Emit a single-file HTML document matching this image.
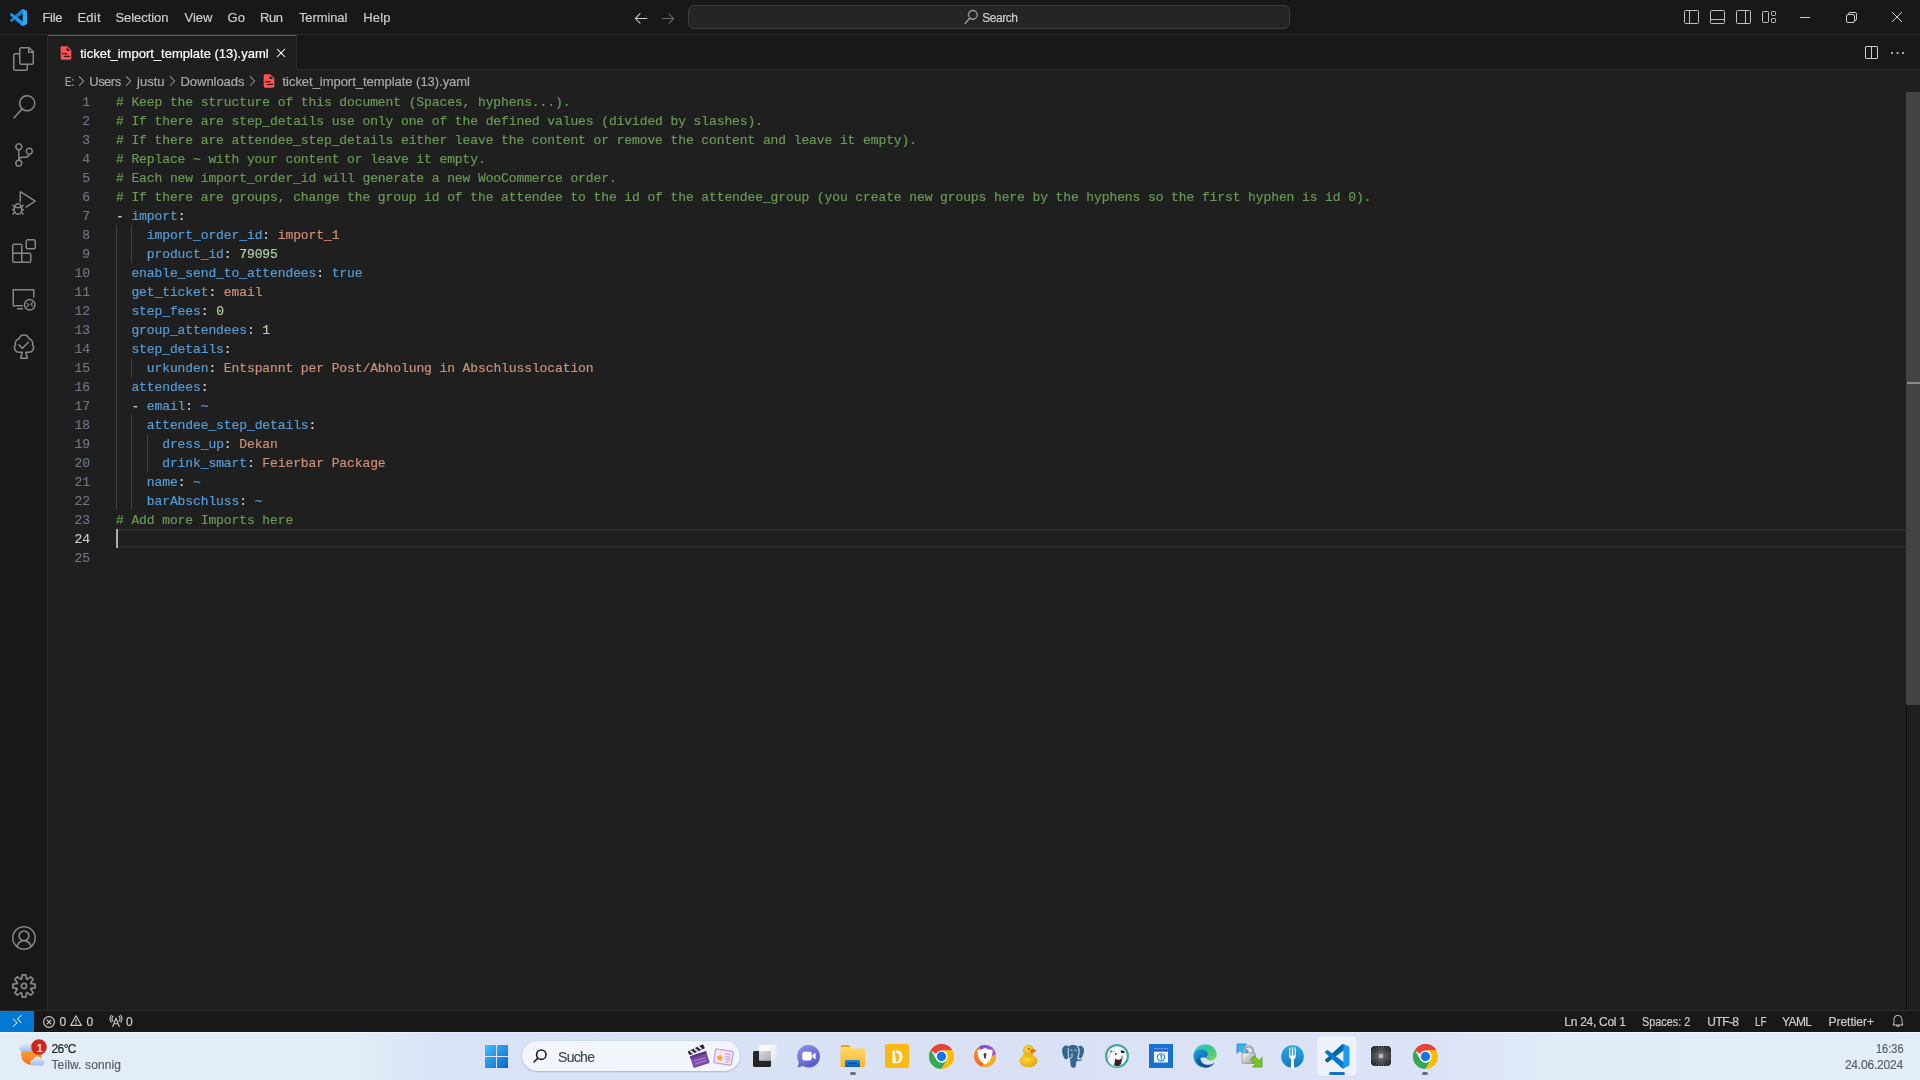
<!DOCTYPE html>
<html lang="en">
<head>
<meta charset="utf-8">
<title>ticket_import_template (13).yaml - Visual Studio Code</title>
<style>

*{box-sizing:border-box;margin:0;padding:0}
html,body{width:1920px;height:1080px;overflow:hidden;background:#1f1f1f}
body{position:relative;font-family:"Liberation Sans",sans-serif;-webkit-font-smoothing:antialiased}
#root{position:absolute;left:0;top:0;width:1920px;height:1080px;will-change:transform}
.t{position:absolute;white-space:pre;line-height:0;height:0;-webkit-text-stroke:0.2px}
svg{position:absolute;overflow:visible}
#titlebar{position:absolute;left:0;top:0;width:1920px;height:35px;background:#181818;border-bottom:1px solid #2b2b2b}
#cmd{position:absolute;left:688px;top:5px;width:602px;height:24px;border:1px solid #3c3c3c;border-radius:6px;background:#252525}
#activity{position:absolute;left:0;top:35px;width:48px;height:975px;background:#181818;border-right:1px solid #2b2b2b}
#tabs{position:absolute;left:48px;top:35px;width:1872px;height:35px;background:#181818;border-bottom:1px solid #2b2b2b}
#tab{position:absolute;left:0;top:0;width:249px;height:35px;background:#1f1f1f;border-top:1px solid #0078d4;border-right:1px solid #2b2b2b}
#crumbs{position:absolute;left:48px;top:70px;width:1872px;height:22px;background:#1f1f1f}
#editor{position:absolute;left:48px;top:92px;width:1872px;height:918px;background:#1f1f1f}
.ln{position:absolute;left:0;width:42px;text-align:right;height:19px;line-height:19px;font-family:"Liberation Mono",monospace;font-size:13px;letter-spacing:-0.1px;color:#6e7681;white-space:pre;-webkit-text-stroke:0.15px}
.ln.cur{color:#cccccc}
.cl{position:absolute;left:68px;height:19px;line-height:19px;font-family:"Liberation Mono",monospace;font-size:13px;letter-spacing:-0.1px;color:#cccccc;white-space:pre;-webkit-text-stroke:0.18px}
.c{color:#6a9955}.k{color:#569cd6}.s{color:#ce9178}.n{color:#b5cea8}
.guide{position:absolute;width:1px;background:#404040}
#curline{position:absolute;left:68px;top:437px;width:1790px;height:19px;border-top:2px solid #2a2a2a;border-bottom:2px solid #2a2a2a}
#cursor{position:absolute;left:68px;top:437px;width:2px;height:19px;background:#aeafad}
#vscroll{position:absolute;left:1858px;top:0;width:14px;height:918px;border-left:1px solid #0a0a0a}
#slider{position:absolute;left:-1px;top:0;width:14px;height:613px;background:#434343}
#ovcur{position:absolute;left:0;top:290px;width:13px;height:2px;background:#8a8a8a}
#status{position:absolute;left:0;top:1010px;width:1920px;height:22px;background:#181818;border-top:1px solid #2b2b2b}
#remote{position:absolute;left:0;top:0;width:34px;height:21px;background:#0078d4}

#taskbar{position:absolute;left:0;top:1032px;width:1920px;height:48px;background:linear-gradient(90deg,#e2edf8 0%,#e2edf8 18.5%,#d9e2f7 23%,#dae1f5 50%,#dce3f6 75%,#e2ecf8 81.5%,#e3edf9 100%);box-shadow:inset 0 1px 0 rgba(255,255,255,.35)}
#pill{position:absolute;left:522px;top:9px;width:218px;height:30px;border-radius:15px;background:#f2f5fc;box-shadow:0 0.5px 1.5px rgba(60,70,110,.45)}
#active{position:absolute;left:1318px;top:5px;width:38px;height:38px;border-radius:4px;background:#edf1fa;box-shadow:0 0 0 0.5px rgba(255,255,255,.7)}
.dot{position:absolute;height:3px;border-radius:1.5px;top:40px}

</style>
</head>
<body>
<div id="root">
<div id="titlebar"><svg style="left:9.5px;top:8.5px" width="17" height="17" viewBox="0 0 256 256" ><path fill="#1a7fc4" d="M246.940 27.638l-52.708-25.378a15.940 15.940 0 0 0-18.180 3.090L3.490 162.680a10.650 10.650 0 0 0 .010 15.750l14.090 12.810a10.660 10.660 0 0 0 13.620.610L238.990 34.210c6.970-5.290 16.980-.320 16.980 8.430v-.610a16 16 0 0 0-9.030-14.392z"/><path fill="#1e97e8" d="M246.940 228.362l-52.708 25.378a15.940 15.940 0 0 1-18.180-3.090L3.490 93.320a10.650 10.650 0 0 1 .010-15.750l14.090-12.810a10.660 10.660 0 0 1 13.620-.610L238.990 221.790c6.970 5.290 16.980.320 16.980-8.430v.610a16 16 0 0 1-9.030 14.392z"/><path fill="#2aabf7" d="M194.233 253.740a15.950 15.950 0 0 1-18.185-3.093c5.900 5.900 15.990 1.720 15.990-6.625V11.978c0-8.345-10.090-12.524-15.990-6.625a15.950 15.950 0 0 1 18.185-3.093l52.699 25.343A16 16 0 0 1 256 42.021v171.958a16 16 0 0 1-9.068 14.418z"/></svg><span class="t " style="left:42.5px;top:17.50px;font-size:13px;color:#cccccc;letter-spacing:-0.318px;font-family:'Liberation Sans',sans-serif">File</span><span class="t " style="left:77.5px;top:17.50px;font-size:13px;color:#cccccc;letter-spacing:0.198px;font-family:'Liberation Sans',sans-serif">Edit</span><span class="t " style="left:115.5px;top:17.50px;font-size:13px;color:#cccccc;letter-spacing:-0.061px;font-family:'Liberation Sans',sans-serif">Selection</span><span class="t " style="left:184.5px;top:17.50px;font-size:13px;color:#cccccc;letter-spacing:0.016px;font-family:'Liberation Sans',sans-serif">View</span><span class="t " style="left:227.5px;top:17.50px;font-size:13px;color:#cccccc;letter-spacing:0.056px;font-family:'Liberation Sans',sans-serif">Go</span><span class="t " style="left:260.1px;top:17.50px;font-size:13px;color:#cccccc;letter-spacing:-0.430px;font-family:'Liberation Sans',sans-serif">Run</span><span class="t " style="left:298.9px;top:17.50px;font-size:13px;color:#cccccc;letter-spacing:-0.089px;font-family:'Liberation Sans',sans-serif">Terminal</span><span class="t " style="left:363.25px;top:17.50px;font-size:13px;color:#cccccc;letter-spacing:0.167px;font-family:'Liberation Sans',sans-serif">Help</span><svg style="left:633px;top:9.5px" width="16" height="16" viewBox="0 0 16 16" ><path fill="#cccccc" d="M7 3.093l-5 5V8.8l5 5 .707-.707-4.146-4.147H14v-1H3.56L7.708 3.8 7 3.093z"/></svg><svg style="left:659.5px;top:9.5px" width="16" height="16" viewBox="0 0 16 16" ><path fill="#6b6b6b" d="M9 13.887l5-5V8.18l-5-5-.707.707 4.146 4.147H2v1h10.44L8.292 13.18l.707.707z"/></svg><div id="cmd"><svg style="left:274.5px;top:4px" width="14" height="14" viewBox="0 0 24 24" ><path fill="#b4b4b4" stroke="#b4b4b4" stroke-width=".500" d="M15.25 0a8.25 8.25 0 0 0-6.18 13.72L1 22.88l1.12 1.12 8.05-9.12A8.251 8.251 0 1 0 15.25.01V0zm0 15a6.75 6.75 0 1 1 0-13.5 6.75 6.75 0 0 1 0 13.5z"/></svg><span class="t " style="left:293.29999999999995px;top:11.84px;font-size:12px;color:#cccccc;letter-spacing:-0.466px;font-family:'Liberation Sans',sans-serif">Search</span></div><svg style="left:1683.5px;top:10px" width="15" height="14" viewBox="0 0 15 14" ><g fill="none" stroke="#c0c0c0" stroke-width="1"><rect x="0.5" y="0.5" width="14" height="13" rx="1"/><path d="M5.5 0.500v13"/></g></svg><svg style="left:1709.5px;top:10px" width="15" height="14" viewBox="0 0 15 14" ><g fill="none" stroke="#c0c0c0" stroke-width="1"><rect x="0.5" y="0.5" width="14" height="13" rx="1"/><path d="M0.500 9.500h14"/></g></svg><svg style="left:1735.5px;top:10px" width="15" height="14" viewBox="0 0 15 14" ><g fill="none" stroke="#c0c0c0" stroke-width="1"><rect x="0.5" y="0.5" width="14" height="13" rx="1"/><path d="M9.500 0.500v13"/></g></svg><svg style="left:1762px;top:10px" width="15" height="14" viewBox="0 0 15 14" ><g fill="none" stroke="#c0c0c0" stroke-width="1"><rect x="0.500" y="1.500" width="6" height="11" rx="1"/><rect x="9.500" y="1.500" width="4" height="4" rx=".800"/><rect x="9.500" y="8.500" width="4" height="4" rx=".800"/></g></svg><svg style="left:1800px;top:17px" width="10" height="1" viewBox="0 0 10 1" ><rect width="10" height="1" fill="#cccccc"/></svg><svg style="left:1845.5px;top:12px" width="11" height="11" viewBox="0 0 11 11" ><g fill="none" stroke="#cccccc" stroke-width="1"><rect x="0.500" y="2.500" width="8" height="8" rx="1.500"/><path d="M2.500 2.500v-.500a1.500 1.500 0 0 1 1.500-1.500h5a1.500 1.500 0 0 1 1.500 1.500v5a1.500 1.500 0 0 1-1.500 1.500h-.500"/></g></svg><svg style="left:1892px;top:12px" width="10" height="10" viewBox="0 0 10 10" ><path d="M0 0L10 10M10 0L0 10" stroke="#cccccc" stroke-width="1" fill="none"/></svg></div>
<div id="activity"><svg style="left:12.0px;top:12.0px" width="24" height="24" viewBox="0 0 24 24" ><path fill="#868686" d="M17.5 0h-9L7 1.5V6H2.5L1 7.5v15.07L2.5 24h12.07L16 22.57V18h4.7l1.3-1.43V4.5L17.5 0zm0 2.12l2.38 2.38H17.5V2.12zm-3 20.38h-12v-15H7v9.07L8.5 18h6v4.5zm6-6h-12v-15H16V6h4.5v10.5z"/></svg><svg style="left:12.0px;top:60.0px" width="24" height="24" viewBox="0 0 24 24" ><path fill="#868686" d="M15.25 0a8.25 8.25 0 0 0-6.18 13.72L1 22.88l1.12 1.12 8.05-9.12A8.251 8.251 0 1 0 15.25.01V0zm0 15a6.75 6.75 0 1 1 0-13.5 6.75 6.75 0 0 1 0 13.5z"/></svg><svg style="left:12.0px;top:108.0px" width="24" height="24" viewBox="0 0 24 24" ><path fill="#868686" d="M21.007 8.222A3.738 3.738 0 0 0 15.045 5.2a3.737 3.737 0 0 0 1.156 6.583 2.988 2.988 0 0 1-2.668 1.67h-2.99a4.456 4.456 0 0 0-2.989 1.165V7.4a3.737 3.737 0 1 0-1.494 0v9.117a3.776 3.776 0 1 0 1.816.099 2.99 2.99 0 0 1 2.668-1.667h2.99a4.484 4.484 0 0 0 4.223-3.039 3.736 3.736 0 0 0 3.25-3.687zM4.565 3.738a2.242 2.242 0 1 1 4.484 0 2.242 2.242 0 0 1-4.484 0zm4.484 16.441a2.242 2.242 0 1 1-4.484 0 2.242 2.242 0 0 1 4.484 0zm8.221-9.715a2.242 2.242 0 1 1 0-4.485 2.242 2.242 0 0 1 0 4.485z"/></svg><svg style="left:12.0px;top:156.0px" width="24" height="24" viewBox="0 0 24 24" ><path fill="#868686" d="M10.94 13.5l-1.32 1.32a3.73 3.73 0 0 0-7.24 0L1.06 13.5 0 14.56l1.72 1.72-.22.22V18H0v1.5h1.5v.08c.077.489.214.966.41 1.42L0 22.94 1.06 24l1.65-1.65A4.308 4.308 0 0 0 6 24a4.31 4.31 0 0 0 3.29-1.65L10.94 24 12 22.94 10.09 21c.198-.464.336-.951.41-1.45v-.1H12V18h-1.5v-1.5l-.22-.22L12 14.56l-1.06-1.06zM6 13.5a2.25 2.25 0 0 1 2.25 2.25h-4.5A2.25 2.25 0 0 1 6 13.5zm3 6a3.33 3.33 0 0 1-3 3 3.33 3.33 0 0 1-3-3v-2.25h6v2.25zm14.76-9.9v1.26L13.5 17.37V15.6l8.5-5.37L9 2v9.46a5.07 5.07 0 0 0-1.5-.72V.63L8.64 0l15.12 9.6z"/></svg><svg style="left:12.0px;top:204.0px" width="24" height="24" viewBox="0 0 24 24" ><path fill="#868686" d="M13.5 1.5L15 0h7.5L24 1.5V9l-1.5 1.5H15L13.5 9V1.5zm1.5 0V9h7.5V1.5H15zM0 15V6l1.5-1.5H9L10.5 6v7.5H18l1.5 1.5v7.5L18 24H1.5L0 22.5V15zm9-1.5V6H1.5v7.5H9zM9 15H1.5v7.5H9V15zm1.5 7.5H18V15h-7.5v7.5z"/></svg><svg style="left:12px;top:253px" width="24" height="24" viewBox="0 0 24 24" ><g fill="none" stroke="#868686" stroke-width="1.500"><path d="M11 17.750H1.250V1.750h20.500V9.500"/><path d="M5 20.750h6"/><circle cx="17.750" cy="16.750" r="5.250"/><path d="M14.700 14.900l2.100 2.100-2.100 2.100M20.900 14.200l-2.100 2.100 2.100 2.100" stroke-width="1.100"/></g></svg><svg style="left:12px;top:335px" width="24" height="24" viewBox="0 0 24 24" ><g transform="translate(0,-35)" fill="none" stroke="#868686" stroke-width="1.500" stroke-linejoin="round" stroke-linecap="round"><path d="M8.600 23.200L10.300 17.200H7.200a4.600 4.600 0 0 1-3.600-7.600a4 4 0 0 1 3.300-5.500a5.200 5.200 0 0 1 10.200 0a4 4 0 0 1 3.300 5.500a4.600 4.600 0 0 1-3.600 7.600H13.700L15.400 23.200z"/><path d="M6.900 9.700l3.300 3.700 6.200-6.100"/></g></svg><svg style="left:12.0px;top:891.0px" width="24" height="24" viewBox="0 0 16 16" ><path fill="#868686" d="M16 7.992C16 3.58 12.416 0 8 0S0 3.58 0 7.992c0 2.43 1.104 4.62 2.832 6.09.016.016.032.016.032.032.144.112.288.224.448.336.08.048.144.111.224.175A7.98 7.98 0 0 0 8.016 16a7.98 7.98 0 0 0 4.48-1.375c.08-.048.144-.111.224-.16.144-.111.304-.223.448-.335.016-.016.032-.016.032-.032 1.696-1.487 2.8-3.676 2.8-6.106zm-8 7.001c-1.504 0-2.88-.48-4.016-1.279.016-.128.048-.255.08-.383a4.17 4.17 0 0 1 .416-.991c.176-.304.384-.576.64-.816.24-.24.528-.463.816-.639.304-.176.624-.304.976-.4A4.15 4.15 0 0 1 8 10.342a4.185 4.185 0 0 1 2.928 1.166c.368.368.656.8.864 1.295.112.288.192.592.24.911A7.03 7.03 0 0 1 8 14.993zm-2.448-7.4a2.49 2.49 0 0 1-.208-1.024c0-.351.064-.703.208-1.023.144-.32.336-.607.576-.847.24-.24.528-.431.848-.575.32-.144.672-.208 1.024-.208.368 0 .704.064 1.024.208.32.144.608.335.848.575.24.24.432.528.576.847.144.32.208.672.208 1.023 0 .368-.064.704-.208 1.023a2.84 2.84 0 0 1-.576.848 2.84 2.84 0 0 1-.848.575 2.715 2.715 0 0 1-2.064 0 2.84 2.84 0 0 1-.848-.575 2.526 2.526 0 0 1-.56-.848zm7.424 5.306c0-.032-.016-.048-.016-.08a5.22 5.22 0 0 0-.688-1.406 4.883 4.883 0 0 0-1.088-1.135 5.207 5.207 0 0 0-1.04-.608 2.82 2.82 0 0 0 .464-.383 4.2 4.2 0 0 0 .624-.784 3.624 3.624 0 0 0 .528-1.934 3.71 3.71 0 0 0-.288-1.47 3.799 3.799 0 0 0-.816-1.199 3.845 3.845 0 0 0-1.2-.8 3.72 3.72 0 0 0-1.472-.287 3.72 3.72 0 0 0-1.472.288 3.631 3.631 0 0 0-1.2.815 3.84 3.84 0 0 0-.8 1.199 3.71 3.71 0 0 0-.288 1.47c0 .352.048.688.144 1.007.096.336.224.64.4.927.16.288.384.544.624.784.144.144.304.271.48.383a5.12 5.12 0 0 0-1.04.624c-.416.32-.784.703-1.088 1.119a4.999 4.999 0 0 0-.688 1.406c-.016.032-.016.064-.016.08C1.776 11.636.992 9.91.992 7.992.992 4.14 4.144.991 8 .991s7.008 3.149 7.008 7.001a6.96 6.96 0 0 1-2.032 4.907z"/></svg><svg style="left:12.0px;top:939.0px" width="24" height="24" viewBox="0 0 24 24" ><path fill="#868686" d="M19.85 8.75l4.15.83v4.84l-4.15.83 2.35 3.52-3.43 3.43-3.52-2.35-.83 4.15H9.58l-.83-4.15-3.52 2.35-3.43-3.43 2.35-3.52L0 14.42V9.58l4.15-.83L1.8 5.23 5.23 1.8l3.52 2.35L9.58 0h4.84l.83 4.15 3.52-2.35 3.43 3.43-2.35 3.52zm-1.57 5.07l4-.81v-2l-4-.81-.54-1.3 2.29-3.43-1.43-1.43-3.43 2.29-1.3-.54-.81-4h-2l-.81 4-1.3.54-3.43-2.29-1.43 1.43L6.38 8.9l-.54 1.3-4 .81v2l4 .81.54 1.3-2.29 3.43 1.43 1.43 3.43-2.29 1.3.54.81 4h2l.81-4 1.3-.54 3.43 2.29 1.43-1.43-2.29-3.43.54-1.3zm-8.186-4.672A3.43 3.43 0 0 1 12 8.57 3.44 3.44 0 0 1 15.43 12a3.43 3.43 0 1 1-5.336-2.852zm.956 4.274c.281.188.612.288.95.288A1.7 1.7 0 0 0 13.71 12a1.71 1.71 0 1 0-2.66 1.422z"/></svg></div>
<div id="tabs"><div id="tab"><svg style="left:10px;top:9px" width="16" height="16" viewBox="0 0 24 24" ><path fill="#ff5252" d="M13 9h5.5L13 3.500V9M6 2h8l6 6v12a2 2 0 0 1-2 2H6a2 2 0 0 1-2-2V4c0-1.110.890-2 2-2m12 16v-2H9v2h9m-4-4v-2H6v2h8z"/></svg><span class="t " style="left:32.2px;top:18.00px;font-size:13px;color:#ffffff;letter-spacing:-0.003px;font-family:'Liberation Sans',sans-serif">ticket_import_template (13).yaml</span><svg style="left:225px;top:9px" width="16" height="16" viewBox="0 0 16 16" ><path fill="#ffffff" d="M8 8.707l3.646 3.647.708-.707L8.707 8l3.647-3.646-.707-.708L8 7.293 4.354 3.646l-.707.708L7.293 8l-3.646 3.646.707.708L8 8.707z"/></svg></div><svg style="left:1814.7px;top:9.5px" width="16" height="16" viewBox="0 0 16 16" ><path fill="#cccccc" d="M14 1H3L2 2v11l1 1h11l1-1V2l-1-1zM8 13H3V2h5v11zm6 0H9V2h5v11z"/></svg><svg style="left:1840.5px;top:10px" width="16" height="16" viewBox="0 0 16 16" ><g fill="#cccccc"><rect x="2.100" y="7.100" width="1.800" height="1.800"/><rect x="7.600" y="7.100" width="1.800" height="1.800"/><rect x="13.100" y="7.100" width="1.800" height="1.800"/></g></svg></div>
<div id="crumbs"><span class="t " style="left:16.5px;top:12.00px;font-size:13px;color:#a9a9a9;transform:scaleX(0.7482);transform-origin:0 0;font-family:'Liberation Sans',sans-serif">E:</span><svg style="left:25.299999999999997px;top:3.200000000000003px" width="16" height="16" viewBox="0 0 16 16" ><path fill="#a9a9a9" d="M10.072 8.024L5.715 3.667l.618-.62L11 7.716v.618L6.333 13l-.618-.619 4.357-4.357z"/></svg><span class="t " style="left:41.25px;top:12.00px;font-size:13px;color:#a9a9a9;letter-spacing:-0.513px;font-family:'Liberation Sans',sans-serif">Users</span><svg style="left:71.9px;top:3.200000000000003px" width="16" height="16" viewBox="0 0 16 16" ><path fill="#a9a9a9" d="M10.072 8.024L5.715 3.667l.618-.62L11 7.716v.618L6.333 13l-.618-.619 4.357-4.357z"/></svg><span class="t " style="left:89.0px;top:12.00px;font-size:13px;color:#a9a9a9;letter-spacing:0.008px;font-family:'Liberation Sans',sans-serif">justu</span><svg style="left:116px;top:3.200000000000003px" width="16" height="16" viewBox="0 0 16 16" ><path fill="#a9a9a9" d="M10.072 8.024L5.715 3.667l.618-.62L11 7.716v.618L6.333 13l-.618-.619 4.357-4.357z"/></svg><span class="t " style="left:132.5px;top:12.00px;font-size:13px;color:#a9a9a9;letter-spacing:-0.041px;font-family:'Liberation Sans',sans-serif">Downloads</span><svg style="left:196.3px;top:3.200000000000003px" width="16" height="16" viewBox="0 0 16 16" ><path fill="#a9a9a9" d="M10.072 8.024L5.715 3.667l.618-.62L11 7.716v.618L6.333 13l-.618-.619 4.357-4.357z"/></svg><svg style="left:213px;top:3px" width="16" height="16" viewBox="0 0 24 24" ><path fill="#ff5252" d="M13 9h5.5L13 3.500V9M6 2h8l6 6v12a2 2 0 0 1-2 2H6a2 2 0 0 1-2-2V4c0-1.110.890-2 2-2m12 16v-2H9v2h9m-4-4v-2H6v2h8z"/></svg><span class="t " style="left:234.5px;top:12.00px;font-size:13px;color:#a9a9a9;letter-spacing:-0.035px;font-family:'Liberation Sans',sans-serif">ticket_import_template (13).yaml</span></div>
<div id="editor"><div id="curline"></div><div class="guide" style="left:68px;top:133px;height:285px"></div><div class="guide" style="left:83px;top:133px;height:38px"></div><div class="guide" style="left:83px;top:266px;height:19px"></div><div class="guide" style="left:83px;top:323px;height:95px"></div><div class="guide" style="left:99px;top:342px;height:38px"></div><div class="ln" style="top:1px">1</div><div class="cl" style="top:1px"><span class="c"># Keep the structure of this document (Spaces, hyphens...).</span></div><div class="ln" style="top:20px">2</div><div class="cl" style="top:20px"><span class="c"># If there are step_details use only one of the defined values (divided by slashes).</span></div><div class="ln" style="top:39px">3</div><div class="cl" style="top:39px"><span class="c"># If there are attendee_step_details either leave the content or remove the content and leave it empty).</span></div><div class="ln" style="top:58px">4</div><div class="cl" style="top:58px"><span class="c"># Replace ~ with your content or leave it empty.</span></div><div class="ln" style="top:77px">5</div><div class="cl" style="top:77px"><span class="c"># Each new import_order_id will generate a new WooCommerce order.</span></div><div class="ln" style="top:96px">6</div><div class="cl" style="top:96px"><span class="c"># If there are groups, change the group id of the attendee to the id of the attendee_group (you create new groups here by the hyphens so the first hyphen is id 0).</span></div><div class="ln" style="top:115px">7</div><div class="cl" style="top:115px">- <span class="k">import</span>:</div><div class="ln" style="top:134px">8</div><div class="cl" style="top:134px">    <span class="k">import_order_id</span>: <span class="s">import_1</span></div><div class="ln" style="top:153px">9</div><div class="cl" style="top:153px">    <span class="k">product_id</span>: <span class="n">79095</span></div><div class="ln" style="top:172px">10</div><div class="cl" style="top:172px">  <span class="k">enable_send_to_attendees</span>: <span class="k">true</span></div><div class="ln" style="top:191px">11</div><div class="cl" style="top:191px">  <span class="k">get_ticket</span>: <span class="s">email</span></div><div class="ln" style="top:210px">12</div><div class="cl" style="top:210px">  <span class="k">step_fees</span>: <span class="n">0</span></div><div class="ln" style="top:229px">13</div><div class="cl" style="top:229px">  <span class="k">group_attendees</span>: <span class="n">1</span></div><div class="ln" style="top:248px">14</div><div class="cl" style="top:248px">  <span class="k">step_details</span>:</div><div class="ln" style="top:267px">15</div><div class="cl" style="top:267px">    <span class="k">urkunden</span>: <span class="s">Entspannt per Post/Abholung in Abschlusslocation</span></div><div class="ln" style="top:286px">16</div><div class="cl" style="top:286px">  <span class="k">attendees</span>:</div><div class="ln" style="top:305px">17</div><div class="cl" style="top:305px">  - <span class="k">email</span>: <span class="k">~</span></div><div class="ln" style="top:324px">18</div><div class="cl" style="top:324px">    <span class="k">attendee_step_details</span>:</div><div class="ln" style="top:343px">19</div><div class="cl" style="top:343px">      <span class="k">dress_up</span>: <span class="s">Dekan</span></div><div class="ln" style="top:362px">20</div><div class="cl" style="top:362px">      <span class="k">drink_smart</span>: <span class="s">Feierbar Package</span></div><div class="ln" style="top:381px">21</div><div class="cl" style="top:381px">    <span class="k">name</span>: <span class="k">~</span></div><div class="ln" style="top:400px">22</div><div class="cl" style="top:400px">    <span class="k">barAbschluss</span>: <span class="k">~</span></div><div class="ln" style="top:419px">23</div><div class="cl" style="top:419px"><span class="c"># Add more Imports here</span></div><div class="ln cur" style="top:438px">24</div><div class="ln" style="top:457px">25</div><div id="cursor"></div><div id="vscroll"><div id="slider"></div><div id="ovcur"></div></div></div>
<div id="status"><div id="remote"><svg style="left:10px;top:2.7px" width="14.5" height="14.5" viewBox="0 0 16 16" ><path fill="#ffffff" d="M12.904 9.57L8.928 5.596l3.976-3.976-.619-.62L8 5.286v.619l4.285 4.285.62-.618zM3 5.62l4.072 4.07L3 13.763l.619.618L8 10v-.619L3.619 5 3 5.62z"/></svg></div><svg style="left:42.5px;top:4.5px" width="12" height="12" viewBox="0 0 12 12" ><g fill="none" stroke="#cccccc" stroke-width="1.150"><circle cx="6" cy="6" r="5.400"/><path d="M3.700 3.700l4.600 4.600M8.300 3.700l-4.600 4.600"/></g></svg><span class="t " style="left:59.5px;top:11.34px;font-size:12px;color:#cccccc;font-family:'Liberation Sans',sans-serif">0</span><svg style="left:70px;top:4.2999999999999545px" width="12" height="11" viewBox="0 0 12 11" ><g fill="none" stroke="#cccccc" stroke-width="1.100" stroke-linejoin="round"><path d="M6 .800L11.400 10.400H.6z"/><path d="M6 4v3.300M6 8.100v1.200"/></g></svg><span class="t " style="left:86.5px;top:11.34px;font-size:12px;color:#cccccc;font-family:'Liberation Sans',sans-serif">0</span><svg style="left:110px;top:4px" width="12" height="12" viewBox="0 0 13 13" ><g fill="none" stroke="#cccccc" stroke-width="1.150" stroke-linecap="round"><path d="M3 12.500L6.500 3.500 10 12.500M4.200 9.500h4.600"/><path d="M3.300 1.200a4.300 4.300 0 0 0 0 5.600M9.700 1.200a4.300 4.300 0 0 1 0 5.600"/><path d="M1.300 .300a6.800 6.800 0 0 0 0 7.500M11.700 .300a6.800 6.800 0 0 1 0 7.500"/></g></svg><span class="t " style="left:126px;top:11.34px;font-size:12px;color:#cccccc;font-family:'Liberation Sans',sans-serif">0</span><span class="t " style="left:1564.3px;top:11.34px;font-size:12px;color:#cccccc;letter-spacing:-0.274px;font-family:'Liberation Sans',sans-serif">Ln 24, Col 1</span><span class="t " style="left:1642.3px;top:11.34px;font-size:12px;color:#cccccc;transform:scaleX(0.9030);transform-origin:0 0;font-family:'Liberation Sans',sans-serif">Spaces: 2</span><span class="t " style="left:1707.3px;top:11.34px;font-size:12px;color:#cccccc;letter-spacing:-0.575px;font-family:'Liberation Sans',sans-serif">UTF-8</span><span class="t " style="left:1755.0px;top:11.34px;font-size:12px;color:#cccccc;transform:scaleX(0.8205);transform-origin:0 0;font-family:'Liberation Sans',sans-serif">LF</span><span class="t " style="left:1782.0px;top:11.34px;font-size:12px;color:#cccccc;letter-spacing:-0.599px;font-family:'Liberation Sans',sans-serif">YAML</span><span class="t " style="left:1828.5px;top:11.34px;font-size:12px;color:#cccccc;letter-spacing:-0.023px;font-family:'Liberation Sans',sans-serif">Prettier+</span><svg style="left:1891px;top:3.2000000000000455px" width="14" height="14" viewBox="0 0 16 16" ><path fill="#cccccc" d="M13.377 10.573a7.63 7.63 0 0 1-.383-2.38V6.195a5.115 5.115 0 0 0-1.268-3.446 5.138 5.138 0 0 0-3.242-1.722c-.694-.072-1.4 0-2.07.227-.67.215-1.28.574-1.794 1.053a4.923 4.923 0 0 0-1.208 1.675 5.067 5.067 0 0 0-.431 2.022v2.2a7.61 7.61 0 0 1-.383 2.37L2 12.343l.479.658h3.505c0 .526.215 1.04.586 1.412.37.37.885.586 1.412.586.526 0 1.04-.215 1.411-.586s.587-.886.587-1.412h3.505l.478-.658-.586-1.77zm-4.69 3.147a.997.997 0 0 1-.705.299.997.997 0 0 1-.706-.3.997.997 0 0 1-.3-.705h1.999a.939.939 0 0 1-.287.706zm-5.515-1.71l.371-1.114a8.633 8.633 0 0 0 .443-2.691V6.004c0-.563.12-1.113.347-1.616.227-.514.55-.969.969-1.34.419-.382.91-.67 1.436-.837.538-.18 1.1-.24 1.65-.18a4.147 4.147 0 0 1 2.597 1.4 4.133 4.133 0 0 1 1.004 2.776v2.01c0 .909.144 1.818.443 2.691l.371 1.113h-9.63v-.012z"/></svg></div>
<div id="taskbar"><svg style="left:19px;top:6px" width="27" height="29" viewBox="0 0 27 29" ><defs><linearGradient id="sun" x1="0" y1="0" x2="0" y2="1"><stop offset="0" stop-color="#ffb63a"/><stop offset="1" stop-color="#f2711d"/></linearGradient><linearGradient id="cl" x1="0" y1="0" x2="0" y2="1"><stop offset="0" stop-color="#e3ecfb"/><stop offset="1" stop-color="#a3bfee"/></linearGradient></defs><circle cx="12.500" cy="16.500" r="10.500" fill="url(#sun)"/><path d="M2.500 13.500a3 3 0 0 1 .900-5.800 4.200 4.200 0 0 1 7.900-.500 3.200 3.200 0 0 1 .700 6.300z" fill="url(#cl)"/><path d="M13.500 27.500a3 3 0 0 1 .700-5.900 4.300 4.300 0 0 1 8-.600 3.300 3.300 0 0 1 .800 6.500z" fill="url(#cl)"/><circle cx="20" cy="9" r="7.800" fill="#d0271d"/></svg><span class="t " style="left:36.5px;top:15.52px;font-size:11.5px;color:#ffffff;font-family:'Liberation Sans',sans-serif">1</span><span class="t " style="left:51.5px;top:17.34px;font-size:12px;color:#1b1b1b;letter-spacing:-0.604px;font-family:'Liberation Sans',sans-serif">26°C</span><span class="t " style="left:51.5px;top:32.84px;font-size:12px;color:#5d6066;letter-spacing:0.121px;font-family:'Liberation Sans',sans-serif">Teilw. sonnig</span><svg style="left:485px;top:13px" width="23" height="23" viewBox="0 0 23 23" ><defs><linearGradient id="win" x1="0" y1="0" x2="1" y2="1"><stop offset="0" stop-color="#41c2f7"/><stop offset="1" stop-color="#0a63c9"/></linearGradient></defs><path fill="url(#win)" d="M0 0h11v11H0zM12 0h11v11H12zM0 12h11v11H0zM12 12h11v11H12z"/></svg><div id="pill"><svg style="left:11px;top:8px" width="14" height="14" viewBox="0 0 14 14" ><g fill="none" stroke="#1f1f1f" stroke-width="1.600" stroke-linecap="round"><circle cx="8.300" cy="5.700" r="4.700"/><path d="M4.900 9.100L1 13"/></g></svg><span class="t " style="left:36.0px;top:15.65px;font-size:14px;color:#444a52;letter-spacing:-0.676px;font-family:'Liberation Sans',sans-serif">Suche</span><svg style="left:166px;top:4px" width="22" height="24" viewBox="0 0 22 24" ><g transform="rotate(-18 11 12)"><rect x="2.500" y="8.500" width="17" height="12.500" rx="1.200" fill="#7a4aa8"/><rect x="2.500" y="3.200" width="17" height="4.300" rx=".800" fill="#2c2540" transform="rotate(-7 2.500 7.500)"/><path d="M5 3.600l2.200 4M9.500 3.200l2.200 4M14 2.800l2.200 4" stroke="#e9e4f2" stroke-width="1.800" transform="rotate(-7 2.500 7.500)"/><rect x="2.500" y="8.500" width="17" height="2.600" fill="#5c3a86"/><path d="M5 14.500h12M5 17.500h12" stroke="#a884cf" stroke-width="1.300"/></g></svg><svg style="left:191px;top:7px" width="21" height="19" viewBox="0 0 21 19" ><g transform="rotate(9 10 9)"><rect x="1.500" y="2" width="18" height="14" rx="1.500" fill="#f1e3f3" stroke="#c79dd3" stroke-width="1.200"/><path d="M5.800 6.300l1.100 2.200 2.400.35-1.750 1.700.4 2.400-2.150-1.150-2.150 1.150.4-2.400-1.750-1.700 2.400-.35z" fill="#f0a91c" transform="translate(1.200,0.500)"/><path d="M11.500 5.500h6M11.500 8h6M12.500 10.500h5M13 13h4" stroke="#c79dd3" stroke-width="1.100"/></g></svg></div><svg style="left:753px;top:13px" width="24" height="22" viewBox="0 0 24 22" ><defs><linearGradient id="tvw" x1="0" y1="0" x2="1" y2="1"><stop offset="0" stop-color="#ffffff"/><stop offset="1" stop-color="#e4e7ec"/></linearGradient><linearGradient id="tvm" x1="0" y1="0" x2="1" y2="1"><stop offset="0" stop-color="#d9dadc"/><stop offset="1" stop-color="#a9abae"/></linearGradient></defs><rect x="0" y="6" width="18" height="16" rx="1.500" fill="#252525"/><rect x="6" y="0" width="17.500" height="15.500" rx="1.500" fill="url(#tvw)"/><path d="M6 6h12v9.500H6z" fill="url(#tvm)"/></svg><svg style="left:796px;top:12px" width="25" height="25" viewBox="0 0 25 25" ><defs><linearGradient id="chat" x1="0.200" y1="0" x2="0.800" y2="1"><stop offset="0" stop-color="#8a8eea"/><stop offset="1" stop-color="#5457c4"/></linearGradient></defs><path fill="url(#chat)" d="M12.800 1a11.300 11.300 0 1 1-5.700 21.100L1.500 23.500l1.300-5.300A11.300 11.300 0 0 1 12.800 1z"/><rect x="6.300" y="7.800" width="9.400" height="8.600" rx="1.800" fill="#fff"/><path d="M16.300 11.100l3.300-2.300v6.600l-3.300-2.300z" fill="#fff"/></svg><svg style="left:840px;top:12px" width="26" height="24" viewBox="0 0 26 24" ><defs><linearGradient id="fol" x1="0" y1="0" x2="0" y2="1"><stop offset="0" stop-color="#ffd968"/><stop offset="1" stop-color="#f8b52c"/></linearGradient><linearGradient id="folb" x1="0" y1="0" x2="0" y2="1"><stop offset="0" stop-color="#1b8ade"/><stop offset="1" stop-color="#0b5fb3"/></linearGradient></defs><path d="M.500 2.500a1.500 1.500 0 0 1 1.500-1.500h6.500l2.500 2.500H1.500z" fill="#e9a514"/><path d="M.500 4a1 1 0 0 1 1-1h9.500l1.500 1.500h11a1.500 1.500 0 0 1 1.500 1.500v16a1 1 0 0 1-1 1H1.500a1 1 0 0 1-1-1z" fill="url(#fol)"/><path d="M5 17.500a1.500 1.500 0 0 1 1.500-1.500h12a1.500 1.500 0 0 1 1.500 1.500V23H5z" fill="url(#folb)"/><rect x="8" y="18.600" width="9" height="1.400" rx=".700" fill="#0a4f96"/></svg><div class="dot" style="left:850px;width:6px;background:#6c6f78"></div><svg style="left:885px;top:12px" width="24" height="24" viewBox="0 0 24 24" ><rect width="24" height="24" rx="2" fill="#fdb913"/><path fill="#fff" fill-rule="evenodd" d="M7.500 6.500h4.300c3.700 0 5.700 2.300 5.700 6s-2 6.700-5.700 6.700H7.500zM10.600 9v8.700h.900c1.900 0 2.900-1.300 2.900-4.300S13.400 9 11.500 9z"/><path d="M10.300 6v6.500" stroke="#fdb913" stroke-width=".900"/><path d="M14 12.200l1.800.9-1.800.9z" fill="#fff"/></svg><svg style="left:928.5px;top:11.5px" width="25" height="25" viewBox="2 2 44 44" ><path fill="#ea4335" d="M24 2a22 22 0 0 1 19.050 11H24a11 11 0 0 0-9.530 5.500L5.950 13A22 22 0 0 1 24 2z" transform="translate(0,0)"/><path fill="#ea4335" d="M4.950 13A22 22 0 0 1 43.050 13H24a11 11 0 0 0-9.526 5.500z"/><path fill="#34a853" d="M4.950 13l9.524 16.500A11 11 0 0 0 24 35l-6.700 9.960A22 22 0 0 1 4.950 13z"/><path fill="#34a853" d="M4.950 13a22 22 0 0 0 19.050 33l9.526-16.500A11 11 0 0 1 14.474 29.500z"/><path fill="#fbbc04" d="M43.050 13a22 22 0 0 1-19.050 33l9.526-16.500A11 11 0 0 0 24 13z"/><circle cx="24" cy="24" r="10.300" fill="#fff"/><circle cx="24" cy="24" r="8.200" fill="#1a73e8"/></svg><svg style="left:974px;top:13px" width="22" height="22" viewBox="0 0 22 22" ><defs><linearGradient id="av1" x1="0" y1="0" x2="1" y2="1"><stop offset="0" stop-color="#ff8a1f"/><stop offset="1" stop-color="#f0541e"/></linearGradient><linearGradient id="av2" x1="0" y1="0" x2="1" y2="0"><stop offset="0" stop-color="#6c4be0"/><stop offset="1" stop-color="#a25be8"/></linearGradient><linearGradient id="av3" x1="0" y1="0" x2="1" y2="1"><stop offset="0" stop-color="#f8c02a"/><stop offset="1" stop-color="#f2a21c"/></linearGradient></defs><circle cx="11" cy="11" r="11" fill="url(#av1)"/><path d="M5.300 1.600A11 11 0 0 1 21.800 9l-6 3L7 5.500z" fill="url(#av2)"/><path d="M21.800 9A11 11 0 0 1 8 21.600l3-5 7-5z" fill="url(#av3)"/><path d="M11 2.800c2.700 1.500 5 2.100 7.500 2.200.2 6.800-2.300 11.500-7.500 14.500C5.800 16.500 3.300 11.800 3.500 5c2.500-.100 4.800-.700 7.500-2.200z" fill="#fff"/><circle cx="11" cy="9.500" r="1.500" fill="#3a3a4a"/><path d="M10.300 10h1.400l.4 3.200h-2.200z" fill="#3a3a4a"/></svg><svg style="left:1019px;top:11px" width="20" height="25" viewBox="0 0 20 25" ><defs><radialGradient id="dk" cx=".4" cy=".35" r=".8"><stop offset="0" stop-color="#ffd93b"/><stop offset="1" stop-color="#dd9a06"/></radialGradient></defs><ellipse cx="9.500" cy="18" rx="9" ry="6.300" fill="url(#dk)"/><circle cx="9.500" cy="7.500" r="5.800" fill="url(#dk)"/><path d="M4.500 11.500h9.500l1.500 3H3.500z" fill="#efb816"/><path d="M12.500 6.200l4.300.6c.6.100.6 1.200 0 1.500l-4 1.700a2 2 0 0 1-.300-3.800z" fill="#f2651f"/><circle cx="9.800" cy="5.800" r=".800" fill="#4a3208"/></svg><svg style="left:1061px;top:12px" width="24" height="24" viewBox="0 0 24 24" ><g fill="#336791"><path d="M6.500 1.300C2.300 1.300.300 4.500 1.400 9.300c.7 3.100 2 6 3.600 6.200 1 .1 1.700-1.200 2.300-2.300V4z"/><path d="M7 3c1.200-1.400 3.100-2 5-2 2.100 0 3.800.5 5 1.800 1.300 1.400 2 4 1.300 6.700l-1.600 5.200c-.2.800.3 1.200 1.100 1.100l3-.4c.4 0 .5.400.2.600-1 .8-2.600 1.200-4.200 1-1 0-1.500.6-1.600 1.500l-.3 3c-.2 1.600-1.200 2.300-2.600 2.300-1.600 0-2.500-.9-2.700-2.500L9 14.500c-.8-.1-1.600-.5-2-1.200z"/><path d="M17 2.300c3-1.600 5.800.2 6 3.700.2 3-1.200 6.300-3 8.600l-2.500-.4 1-5.500c.4-2.500-.1-4.800-1.500-6.400z"/></g><g fill="none" stroke="#fff" stroke-width=".800" stroke-linecap="round"><path d="M7.300 4.500c-.3 2.800-.2 5.800.3 8.500"/><path d="M16.800 3.200c1.400 1.900 1.500 4.300.9 6.700l-1 4.300"/><path d="M9.500 6.300c.6-.4 1.400-.3 1.800.2M15.300 6.200c-.5-.4-1.200-.3-1.500.1"/><path d="M9 14.200c1.200.2 2-.6 2-1.800V9.800"/></g></svg><svg style="left:1105px;top:12px" width="24" height="24" viewBox="0 0 24 24" ><circle cx="12" cy="12" r="10.900" fill="#fbfcfc" stroke="#46a79c" stroke-width="2.200"/><path d="M3.600 17.500c-.8-4.800 1.600-9.300 6.300-10.600 2.700-.8 5.300-.3 7.300 1l2.200.6c.6.200.7.900.3 1.300l-1 1c.1 1.600-.4 2.900-1.300 3.800l-.9 4.700c-.3 1.300-1 2.300-2 2.900-4.400 1-8.900-.7-10.900-4.700z" fill="#fff"/><path d="M3.500 14.500c.3-3.800 2.800-6.800 6.400-7.700" fill="none" stroke="#9b9491" stroke-width=".700"/><path d="M9 21.300l1.300-6.800c1.300 1.200 3 1.500 4.600.9l2.300-1.500-.8 4.700c-.3 1.600-1.100 2.800-2.400 3.500-1.800.3-3.500 0-5-.8z" fill="#35261f"/><path d="M15.700 6.600c1.400-.5 2.900-.1 3.800.8.300.3.300.8 0 1.100l-.8.700-2.800-.5z" fill="#2a1d18"/><ellipse cx="10.800" cy="9.900" rx=".900" ry="1" fill="#2a1d18"/><path d="M5.300 8.500c-.6-.7-.3-1.800.6-2 .8-.1 1.400.4 1.500 1.100z" fill="#6b625d"/><path d="M16.500 12.400l.4 2.700 1.200-.8-.3-2.500z" fill="#fff" stroke="#35261f" stroke-width=".400"/></svg><svg style="left:1149px;top:12px" width="24" height="24" viewBox="0 0 24 24" ><rect width="24" height="24" fill="#1572d3"/><rect x="5" y="4.500" width="14" height="14" fill="#f4f8fd"/><rect x="5" y="4.500" width="14" height="3.300" fill="#3b6fe0"/><path d="M6.500 6.100h1.200M9 6.100h1.200M11.500 6.100h1.200M14 6.100h1.200M16.500 6.100h1.200" stroke="#1a3fa8" stroke-width="1"/><circle cx="12" cy="13.300" r="3.600" fill="none" stroke="#2a7be0" stroke-width="1.100"/><path d="M11.300 12l1-.700v4.200" fill="none" stroke="#2a7be0" stroke-width="1.100"/></svg><svg style="left:1193px;top:12px" width="24" height="24" viewBox="0 0 24 24" ><defs><linearGradient id="ed1" x1="0" y1="0" x2="1" y2="1"><stop offset="0" stop-color="#35c1f1"/><stop offset=".5" stop-color="#39c98a"/><stop offset="1" stop-color="#7bd855"/></linearGradient><linearGradient id="ed2" x1="0" y1="0" x2="1" y2="1"><stop offset="0" stop-color="#1b9de2"/><stop offset="1" stop-color="#0c59a4"/></linearGradient><linearGradient id="ed3" x1="0" y1="0" x2="0" y2="1"><stop offset="0" stop-color="#1579c8"/><stop offset="1" stop-color="#114a8b"/></linearGradient></defs><path d="M.600 11.500C.800 5.300 5.800.300 12 .300c6.500 0 11.700 4.500 11.700 10.200 0 3.700-3 6-6.200 6-2.300 0-3.800-1-3.800-2 0-.6.700-1 .7-2.500 0-2.200-2.200-4.200-5-4.200-4 0-7.300 1.800-8.800 3.700z" fill="url(#ed1)"/><path d="M.600 11.500C.800 8 4.300 5.500 8.800 5.500c3.600 0 6 2.400 6 4.800 0 1.200-.5 1.800-.9 2.400-.3.500-.3 1 .2 1.500-1-.4-5-1.500-7.300.2C3.800 16.500 5 21 9.500 23.200 4.300 22.200.400 17.300.600 11.500z" fill="url(#ed2)"/><path d="M9.700 23.300C5.800 22.300 3.300 18.500 4 15c.6-2.700 2.800-4.300 5.300-4.300-1.600 1-2 2.800-1.700 4.500.6 3.200 3.500 5.600 7.300 5.600 2.300 0 4.300-.7 5.600-1.600.4-.3.800.1.500.5-2.300 3-6.300 4.700-11.300 3.600z" fill="url(#ed3)"/></svg><svg style="left:1236px;top:11px" width="27" height="25" viewBox="0 0 27 25" ><defs><linearGradient id="lk" x1="0" y1="0" x2="1" y2="1"><stop offset="0" stop-color="#fafafa"/><stop offset="1" stop-color="#8f9294"/></linearGradient></defs><path d="M1 1h9.500L7.800 3.800l4.700 4.700-3.700 3.700L4 7.500 1 10.500z" fill="#36b3ee" stroke="#1b7fc0" stroke-width=".700"/><path d="M8.300 10.500V7.800a4.400 4.400 0 0 1 8.800 0v2.700" fill="none" stroke="#a6a9ab" stroke-width="2.300"/><rect x="6" y="10" width="13.500" height="10.500" rx="1.200" fill="url(#lk)" stroke="#8b8e90" stroke-width=".700"/><path d="M26 24h-9.500l2.700-2.800-4.700-4.700 3.700-3.700 4.800 4.700 3-3z" fill="#76c720" stroke="#4b9a12" stroke-width=".700"/></svg><svg style="left:1281px;top:13px" width="23" height="23" viewBox="0 0 23 23" ><defs><linearGradient id="fk" x1="0" y1="0" x2="0" y2="1"><stop offset="0" stop-color="#2aa7e3"/><stop offset="1" stop-color="#1478b9"/></linearGradient></defs><circle cx="11.500" cy="11.500" r="11.300" fill="url(#fk)"/><path d="M8.200 2.600h1.100v8h1.500v-8.300h1.400v8.300h1.500v-8h1.100v8.500c0 1.700-.9 2.700-2.100 3.100l.5 8.700h-3.400l.5-8.700c-1.200-.4-2.100-1.400-2.100-3.100z" fill="#fff"/></svg><div id="active"></div><svg style="left:1324.5px;top:12px" width="24.5" height="24.5" viewBox="0 0 256 256" ><path fill="#0065a9" d="M246.940 27.638l-52.708-25.378a15.940 15.940 0 0 0-18.180 3.090L3.490 162.680a10.650 10.650 0 0 0 .010 15.750l14.090 12.810a10.660 10.660 0 0 0 13.620.610L238.990 34.210c6.970-5.290 16.980-.320 16.980 8.430v-.610a16 16 0 0 0-9.030-14.392z"/><path fill="#007acc" d="M246.940 228.362l-52.708 25.378a15.940 15.940 0 0 1-18.180-3.090L3.490 93.320a10.650 10.650 0 0 1 .010-15.750l14.090-12.810a10.660 10.660 0 0 1 13.620-.610L238.990 221.790c6.970 5.290 16.980.320 16.980-8.430v.610a16 16 0 0 1-9.030 14.392z"/><path fill="#1f9cf0" d="M194.233 253.740a15.950 15.950 0 0 1-18.185-3.093c5.900 5.900 15.990 1.720 15.990-6.625V11.978c0-8.345-10.090-12.524-15.990-6.625a15.950 15.950 0 0 1 18.185-3.093l52.699 25.343A16 16 0 0 1 256 42.021v171.958a16 16 0 0 1-9.068 14.418z"/></svg><div class="dot" style="left:1329px;width:16px;background:#1a6fca"></div><svg style="left:1371px;top:14px" width="20" height="20" viewBox="0 0 20 20" ><defs><clipPath id="dkc"><rect width="20" height="20" rx="4"/></clipPath></defs><g clip-path="url(#dkc)"><rect width="20" height="20" fill="#232427"/><path d="M10 10L21.00 10.00" stroke="#8d8f92" stroke-width=".700"/><path d="M10 10L20.63 12.85" stroke="#8d8f92" stroke-width=".700"/><path d="M10 10L19.53 15.50" stroke="#8d8f92" stroke-width=".700"/><path d="M10 10L17.78 17.78" stroke="#8d8f92" stroke-width=".700"/><path d="M10 10L15.50 19.53" stroke="#8d8f92" stroke-width=".700"/><path d="M10 10L12.85 20.63" stroke="#8d8f92" stroke-width=".700"/><path d="M10 10L10.00 21.00" stroke="#8d8f92" stroke-width=".700"/><path d="M10 10L7.15 20.63" stroke="#8d8f92" stroke-width=".700"/><path d="M10 10L4.50 19.53" stroke="#8d8f92" stroke-width=".700"/><path d="M10 10L2.22 17.78" stroke="#8d8f92" stroke-width=".700"/><path d="M10 10L0.47 15.50" stroke="#8d8f92" stroke-width=".700"/><path d="M10 10L-0.63 12.85" stroke="#8d8f92" stroke-width=".700"/><path d="M10 10L-1.00 10.00" stroke="#8d8f92" stroke-width=".700"/><path d="M10 10L-0.63 7.15" stroke="#8d8f92" stroke-width=".700"/><path d="M10 10L0.47 4.50" stroke="#8d8f92" stroke-width=".700"/><path d="M10 10L2.22 2.22" stroke="#8d8f92" stroke-width=".700"/><path d="M10 10L4.50 0.47" stroke="#8d8f92" stroke-width=".700"/><path d="M10 10L7.15 -0.63" stroke="#8d8f92" stroke-width=".700"/><path d="M10 10L10.00 -1.00" stroke="#8d8f92" stroke-width=".700"/><path d="M10 10L12.85 -0.63" stroke="#8d8f92" stroke-width=".700"/><path d="M10 10L15.50 0.47" stroke="#8d8f92" stroke-width=".700"/><path d="M10 10L17.78 2.22" stroke="#8d8f92" stroke-width=".700"/><path d="M10 10L19.53 4.50" stroke="#8d8f92" stroke-width=".700"/><path d="M10 10L20.63 7.15" stroke="#8d8f92" stroke-width=".700"/><circle cx="10" cy="10" r="2.200" fill="#b9babc"/></g></svg><svg style="left:1412.5px;top:11.5px" width="25" height="25" viewBox="2 2 44 44" ><path fill="#ea4335" d="M24 2a22 22 0 0 1 19.050 11H24a11 11 0 0 0-9.530 5.500L5.950 13A22 22 0 0 1 24 2z" transform="translate(0,0)"/><path fill="#ea4335" d="M4.950 13A22 22 0 0 1 43.050 13H24a11 11 0 0 0-9.526 5.500z"/><path fill="#34a853" d="M4.950 13l9.524 16.500A11 11 0 0 0 24 35l-6.700 9.960A22 22 0 0 1 4.950 13z"/><path fill="#34a853" d="M4.950 13a22 22 0 0 0 19.050 33l9.526-16.500A11 11 0 0 1 14.474 29.500z"/><path fill="#fbbc04" d="M43.050 13a22 22 0 0 1-19.050 33l9.526-16.500A11 11 0 0 0 24 13z"/><circle cx="24" cy="24" r="10.300" fill="#fff"/><circle cx="24" cy="24" r="8.200" fill="#1a73e8"/></svg><div class="dot" style="left:1422px;width:6px;background:#6c6f78"></div><span class="t " style="left:1875.6px;top:16.94px;font-size:12px;color:#5a5f66;transform:scaleX(0.9157);transform-origin:0 0;font-family:'Liberation Sans',sans-serif">16:36</span><span class="t " style="left:1844.9px;top:32.94px;font-size:12px;color:#5a5f66;letter-spacing:-0.207px;font-family:'Liberation Sans',sans-serif">24.06.2024</span></div>
</div>
</body>
</html>
